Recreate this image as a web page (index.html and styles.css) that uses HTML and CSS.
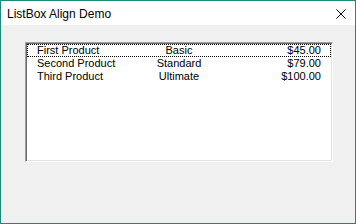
FILE: index.html
```html
<!DOCTYPE html>
<html lang="en">

<head>
  <meta charset="UTF-8">
  <title>ListBox Align Demo</title>
  <link rel="stylesheet" href="styles.css">
</head>

<body>
  <div class="window">
    <div class="titlebar">
      <span class="title">ListBox Align Demo</span>
      <span class="close">
        <svg width="10" height="10" viewBox="0 0 10 10">
          <path d="M0.5 0.5 L9.5 9.5 M9.5 0.5 L0.5 9.5" stroke="#000" stroke-width="1" fill="none" />
        </svg>
      </span>
    </div>
    <div class="client">
      <div class="listbox">
        <div class="row focused">
          <span class="name">First Product</span>
          <span class="tier">Basic</span>
          <span class="price">$45.00</span>
        </div>
        <div class="row">
          <span class="name">Second Product</span>
          <span class="tier">Standard</span>
          <span class="price">$79.00</span>
        </div>
        <div class="row">
          <span class="name">Third Product</span>
          <span class="tier">Ultimate</span>
          <span class="price">$100.00</span>
        </div>
      </div>
    </div>
  </div>
</body>

</html>
```

FILE: styles.css
```css
* {
  padding: 0;
  margin: 0;
  box-sizing: border-box;
}

body {
  background: #f0f0f0;
}

.window {
  width: 356px;
  height: 224px;
  border: 1px solid #1b8a7c;
  display: flex;
  flex-direction: column;
  background-color: #f0f0f0;
}

.titlebar {
  height: 24px;
  background-color: #fff;
  display: flex;
  align-items: center;
  justify-content: space-between;
  padding: 0 9px 0 6px;
}

.title {
  font-family: "Liberation Sans", Arial, sans-serif;
  font-size: 12px;
  color: #000;
  margin-top: 2px;
}

.close {
  width: 10px;
  height: 10px;
  display: flex;
  margin-top: 2px;
}

.client {
  flex: 1;
  padding: 17px 0 0 24px;
}

.listbox {
  width: 308px;
  height: 120px;
  background-color: #fff;
  border: 1px solid;
  border-color: #a0a0a0 #fff #fff #a0a0a0;
  box-shadow: inset 1px 1px #696969, inset -1px -1px #e3e3e3;
  padding: 1px;
}

.row {
  display: grid;
  grid-template-columns: 1fr 1fr 1fr;
  height: 13px;
  line-height: 13px;
  padding: 0 10px;
  font-family: "Liberation Sans", Arial, sans-serif;
  font-size: 11px;
  color: #000;
  white-space: nowrap;
}

.row.focused {
  outline: 1px dotted #000;
  outline-offset: -1px;
}

.tier {
  text-align: center;
}

.price {
  text-align: right;
}
```
